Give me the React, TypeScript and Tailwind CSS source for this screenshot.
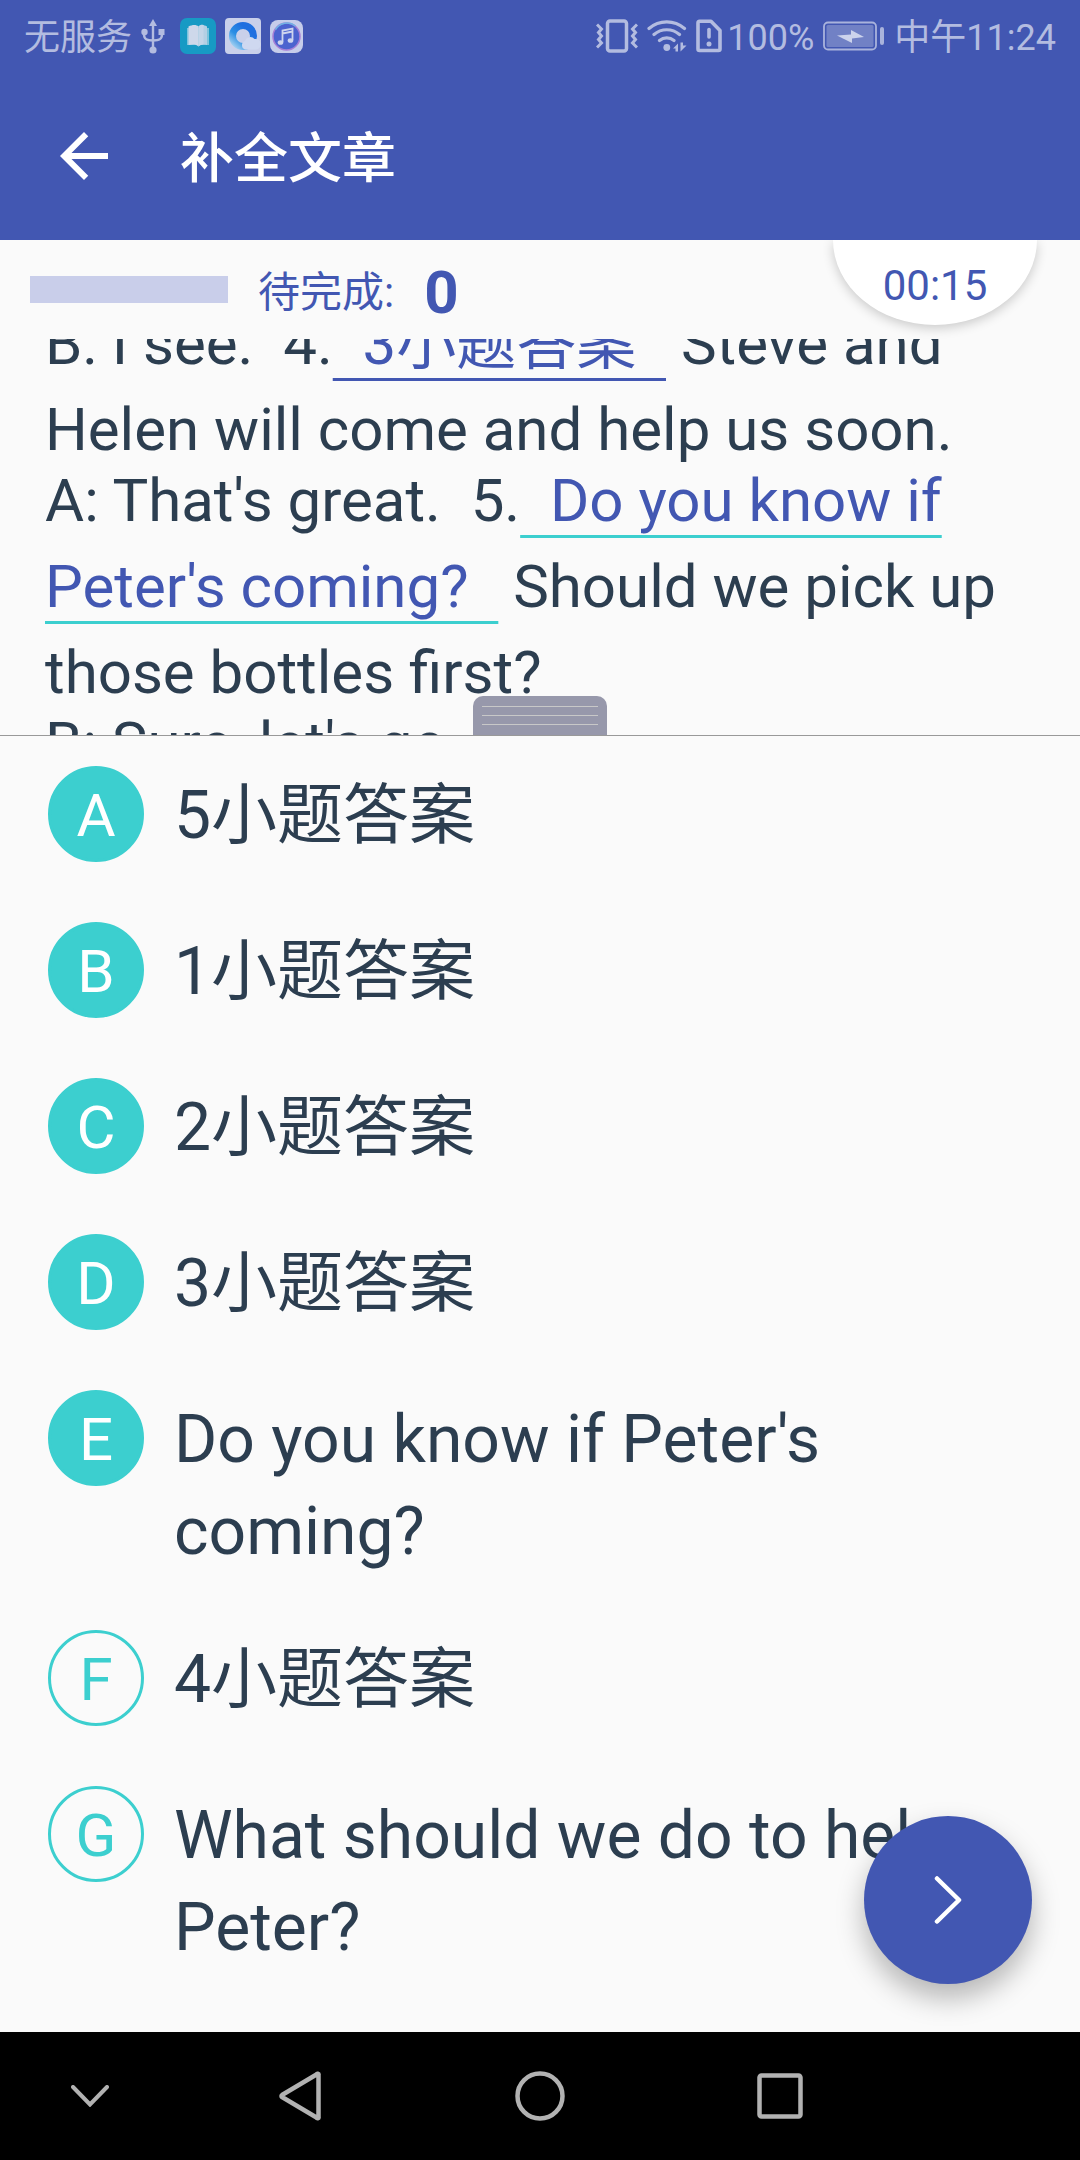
import type { ReactNode } from "react";

type Option = { letter: string; text: string; used: boolean };

const options: Option[] = [
  { letter: "A", text: "5小题答案", used: true },
  { letter: "B", text: "1小题答案", used: true },
  { letter: "C", text: "2小题答案", used: true },
  { letter: "D", text: "3小题答案", used: true },
  { letter: "E", text: "Do you know if Peter's coming?", used: true },
  { letter: "F", text: "4小题答案", used: false },
  { letter: "G", text: "What should we do to help Peter?", used: false },
];

function UsbIcon() {
  return (
    <svg className="h-9 w-6" viewBox="0 0 24 36" fill="none" stroke="currentColor" strokeWidth="2.4" aria-hidden="true">
      <path d="M12 6v24M3 14v2c0 5 2.5 6.500 9 6.500s9-1.500 9-6.500v-2" />
      <path d="M12 1l4 7H8z" fill="currentColor" stroke="none" />
      <circle cx="12" cy="32" r="3.600" fill="currentColor" stroke="none" />
      <circle cx="3.500" cy="14" r="3.200" fill="currentColor" stroke="none" />
      <path d="M17.500 11h6v6h-6z" fill="currentColor" stroke="none" />
    </svg>
  );
}

function BookIcon() {
  return (
    <svg className="size-9" viewBox="0 0 36 36" aria-hidden="true">
      <rect width="36" height="36" rx="7" fill="#179ac4" />
      <path d="M7 10h22v17H7z" fill="#7cc3dc" />
      <path d="M8.500 8.500c4-2 8-2 10 0v20c-2-2.500-6-2.500-10-1.500z" fill="#ced8ea" />
      <path d="M18.500 8.500c2-2 5-2 8.500 0V27c-4-1-7 .0-8.500 1.500z" fill="#b3cfe4" />
      <path d="M18.500 8.500c1.500-1.500 3-2 5-1.500v19c-2 .5-3.500 1-5 2.500z" fill="#c3d5e8" />
    </svg>
  );
}

function BrowserIcon() {
  return (
    <svg className="size-9" viewBox="0 0 36 36" aria-hidden="true">
      <defs>
        <linearGradient id="ring" x1="0" y1="1" x2="0.700" y2="0.200">
          <stop offset="0" stopColor="#a9d4f2" />
          <stop offset="0.500" stopColor="#2b8fe4" />
          <stop offset="1" stopColor="#1f6fe0" />
        </linearGradient>
      </defs>
      <rect width="36" height="36" rx="4" fill="#c9d0ea" />
      <circle cx="18" cy="18" r="10.500" fill="none" stroke="url(#ring)" strokeWidth="7" />
      <path d="M20 31.500a4.500 4.500 0 0 1 0-8.500 5.500 5.500 0 0 1 9.500-2 5 5 0 0 1 2 10.500z" fill="#cfd8f0" />
    </svg>
  );
}

function MusicIcon() {
  return (
    <svg className="size-[33px]" viewBox="0 0 33 33" aria-hidden="true">
      <rect width="33" height="33" rx="8" fill="#c6cdea" />
      <circle cx="16.500" cy="16.500" r="13.500" fill="#4c63cf" stroke="#a77fd6" strokeWidth="1.500" />
      <path d="M5.500 9.500a13.500 13.500 0 0 1 20-3.500" fill="none" stroke="#6fb4e4" strokeWidth="1.500" />
      <g fill="none" stroke="#ced4ee" strokeWidth="1.800">
        <path d="M12.500 22V10.500L22.500 8.500V20M12.500 13.500l10-2" />
      </g>
      <ellipse cx="10.500" cy="22.500" rx="2.800" ry="2.300" fill="#ced4ee" />
      <ellipse cx="20.500" cy="20.500" rx="2.800" ry="2.300" fill="#ced4ee" />
    </svg>
  );
}

function VibrateIcon() {
  return (
    <svg className="h-[34px] w-[42px]" viewBox="0 0 42 34" fill="none" stroke="currentColor" strokeWidth="3.500" aria-hidden="true">
      <rect x="11.500" y="2" width="19" height="30" rx="2.500" />
      <path strokeWidth="3" d="M1 5.500l4.500 4.500-3 3.500 3 3.500-3 3.500 3 3.500L1 28.500M41 5.500l-4.500 4.500 3 3.500-3 3.500 3 3.500-3 3.500 4.500 4.500" />
    </svg>
  );
}

function WifiIcon() {
  return (
    <svg className="h-[34px] w-10" viewBox="0 0 40 34" fill="none" stroke="currentColor" strokeWidth="3.200" strokeLinecap="round" aria-hidden="true">
      <path d="M2 9.500a27 27 0 0 1 35.500 0M7 15.500a19.500 19.500 0 0 1 25.500 0M12.500 21.500a11.500 11.500 0 0 1 14.500 0" />
      <circle cx="19.800" cy="28.500" r="3.400" fill="currentColor" stroke="none" />
      <path d="M26 29.500l5-5v8h-2.500v-3zM39.500 26.500l-6 6v-9h2.500v3z" fill="currentColor" stroke="none" />
    </svg>
  );
}

function SimIcon() {
  return (
    <svg className="h-[34px] w-[26px]" viewBox="0 0 26 34" fill="none" stroke="currentColor" strokeWidth="3.600" aria-hidden="true">
      <path strokeLinejoin="round" d="M3.500 2.300h11.500l9 9.200V30a1.500 1.500 0 0 1-1.500 1.500h-19A1.500 1.500 0 0 1 2 30V4a1.500 1.500 0 0 1 1.500-1.700z" />
      <path strokeLinecap="round" d="M13 10.500v7.500" />
      <circle cx="13" cy="25" r="2.500" fill="currentColor" stroke="none" />
    </svg>
  );
}

function BatteryIcon() {
  return (
    <svg className="h-[30px] w-[62px]" viewBox="0 0 62 30" aria-hidden="true">
      <rect x="1" y="1.500" width="52" height="27" rx="4" fill="none" stroke="#a9b3dc" strokeWidth="1.800" />
      <rect x="3.500" y="4" width="47" height="22" rx="1.500" fill="#7181c5" />
      <path d="M14 14.500l14-1V9l13 7-12 1.500V22z" fill="#ccd3ec" />
      <rect x="57" y="6" width="4" height="18" rx="2" fill="#a9b3dc" />
    </svg>
  );
}

function Paragraph({ children }: { children: ReactNode }) {
  return <p className="-mb-[15px]">{children}</p>;
}

function Blank({ active = false, children }: { active?: boolean; children: string }) {
  return (
    <span
      className={
        active
          ? "text-[#4257b2] underline decoration-[#3ccfcf] decoration-[3px] underline-offset-[14px] [text-decoration-skip-ink:none]"
          : "text-[#4257b2] underline decoration-[#4257b2] decoration-[3px] underline-offset-[14px] [text-decoration-skip-ink:none]"
      }
    >
      {"\u00a0\u00a0" + children + "\u00a0\u00a0"}
    </span>
  );
}

function OptionRow({ letter, text, used }: Option) {
  return (
    <li>
      <button type="button" className="flex min-h-[156px] w-full items-start gap-[30px] px-12 pt-[30px] pb-[22px] text-left">
        <span
          className={
            used
              ? "flex size-24 shrink-0 items-center justify-center rounded-full border-[3px] border-[#3ccfcf] bg-[#3ccfcf] pt-1 text-[60px] leading-none text-white"
              : "flex size-24 shrink-0 items-center justify-center rounded-full border-[3px] border-[#3ccfcf] pt-1 text-[60px] leading-none text-[#3ccfcf]"
          }
        >
          {letter}
        </span>
        <span className="mt-1 text-[66px] leading-[92px]">{text}</span>
      </button>
    </li>
  );
}

export default function App() {
  return (
    <div className="flex min-h-screen flex-col bg-[#fafafa] font-['Roboto','Noto_Sans_CJK_SC',sans-serif] text-[#2c3e50]">
      <header className="bg-[#4257b2]">
        <div className="flex h-[72px] items-center justify-between px-6 text-4xl leading-none text-[#b3bce0]">
          <div className="flex items-center gap-[9px]">
            <span className="pt-1">无服务</span>
            <UsbIcon />
            <span className="ml-1.5 flex items-center gap-[9px]">
              <BookIcon />
              <BrowserIcon />
              <MusicIcon />
            </span>
          </div>
          <div className="flex items-center gap-[9px]">
            <VibrateIcon />
            <WifiIcon />
            <SimIcon />
            <span className="-ml-1 pt-1">100%</span>
            <BatteryIcon />
            <span className="pt-1">中午11:24</span>
          </div>
        </div>
        <div className="flex h-[168px] items-center gap-[60px] px-12">
          <button type="button" aria-label="返回" className="text-white">
            <svg className="size-[72px]" viewBox="0 0 24 24" fill="currentColor" aria-hidden="true">
              <path d="M20 11H7.830l5.590-5.590L12 4l-8 8 8 8 1.410-1.410L7.830 13H20v-2z" />
            </svg>
          </button>
          <h1 className="pt-2 text-[54px] leading-none font-medium text-white">补全文章</h1>
        </div>
      </header>

      <div className="relative z-10 flex h-[99px] items-center px-[30px] text-[#4257b2]">
        <div className="h-[27px] w-[198px] bg-[#c9ceea]" />
        <span className="ml-[30px] pt-1.5 text-[42px] leading-none">待完成:</span>
        <span className="ml-[30px] pt-1.5 text-[60px] leading-none font-bold">0</span>
        <div className="absolute top-0 right-0 h-[99px] w-[264px] overflow-hidden">
          <div className="ml-[17px] flex h-[85px] w-[204px] items-center justify-center bg-white pt-1.5 text-[42px] leading-none shadow-[0_3px_12px_rgba(0,0,0,0.2)] [border-radius:0_0_50%_50%/0_0_100%_100%]">
            00:15
          </div>
        </div>
      </div>

      <section className="relative h-[397px] overflow-hidden border-b border-[#999999] px-[45px] text-[60px] leading-[86px]">
        <div className="-mt-[38px]">
          <Paragraph>
            B: I see.{"\u00a0 "}4.<Blank>3小题答案</Blank> Steve and Helen will come and help us soon.
          </Paragraph>
          <Paragraph>
            A: That's great.{"\u00a0 "}5.<Blank active>Do you know if Peter's coming?</Blank> Should we pick up those bottles first?
          </Paragraph>
          <Paragraph>B: Sure, let's go.</Paragraph>
        </div>
        <button
          type="button"
          aria-label="拖动调整高度"
          className="absolute bottom-0 left-1/2 flex h-[39px] w-[134px] -translate-x-1/2 flex-col gap-2 rounded-t-[10px] bg-[#9798ab] px-[9px] pt-2.5"
        >
          <span className="h-px w-full bg-[#c8c8c8]" />
          <span className="h-px w-full bg-[#c8c8c8]" />
          <span className="h-px w-full bg-[#c8c8c8]" />
        </button>
      </section>

      <main className="relative flex-1">
        <ul>
          {options.map((option) => (
            <OptionRow key={option.letter} {...option} />
          ))}
        </ul>
        <button
          type="button"
          aria-label="下一题"
          className="absolute right-12 bottom-12 flex size-[168px] items-center justify-center rounded-full bg-[#4257b2] text-white shadow-[0_14px_28px_rgba(0,0,0,0.28)]"
        >
          <svg className="h-[50px] w-7" viewBox="0 0 28 50" fill="none" stroke="currentColor" strokeWidth="4.500" strokeLinecap="round" strokeLinejoin="round" aria-hidden="true">
            <path d="M3 3.500l22 21.500L3 46.500" />
          </svg>
        </button>
      </main>

      <nav className="grid h-32 grid-cols-[3fr_4fr_4fr_4fr_3fr] place-items-center bg-black text-[#b2b2b2]">
        <button type="button" aria-label="隐藏导航栏">
          <svg className="h-[22px] w-[38px]" viewBox="0 0 38 22" fill="none" stroke="currentColor" strokeWidth="4" strokeLinecap="round" aria-hidden="true">
            <path d="M2 2l17 17.500L36 2" />
          </svg>
        </button>
        <button type="button" aria-label="返回">
          <svg className="h-[50px] w-11" viewBox="0 0 44 50" fill="none" stroke="currentColor" strokeWidth="4.500" strokeLinejoin="round" aria-hidden="true">
            <path d="M38.500 3.500a1 1 0 0 1 2 .5v42a1 1 0 0 1-2 .5L4 26a1.200 1.200 0 0 1 0-2z" />
          </svg>
        </button>
        <button type="button" aria-label="主屏幕">
          <svg className="size-[50px]" viewBox="0 0 50 50" fill="none" stroke="currentColor" strokeWidth="4.500" aria-hidden="true">
            <circle cx="25" cy="25" r="22.500" />
          </svg>
        </button>
        <button type="button" aria-label="最近任务">
          <svg className="size-[46px]" viewBox="0 0 46 46" fill="none" stroke="currentColor" strokeWidth="4.500" aria-hidden="true">
            <rect x="2.500" y="2.500" width="41" height="41" rx="2" />
          </svg>
        </button>
      </nav>
    </div>
  );
}
